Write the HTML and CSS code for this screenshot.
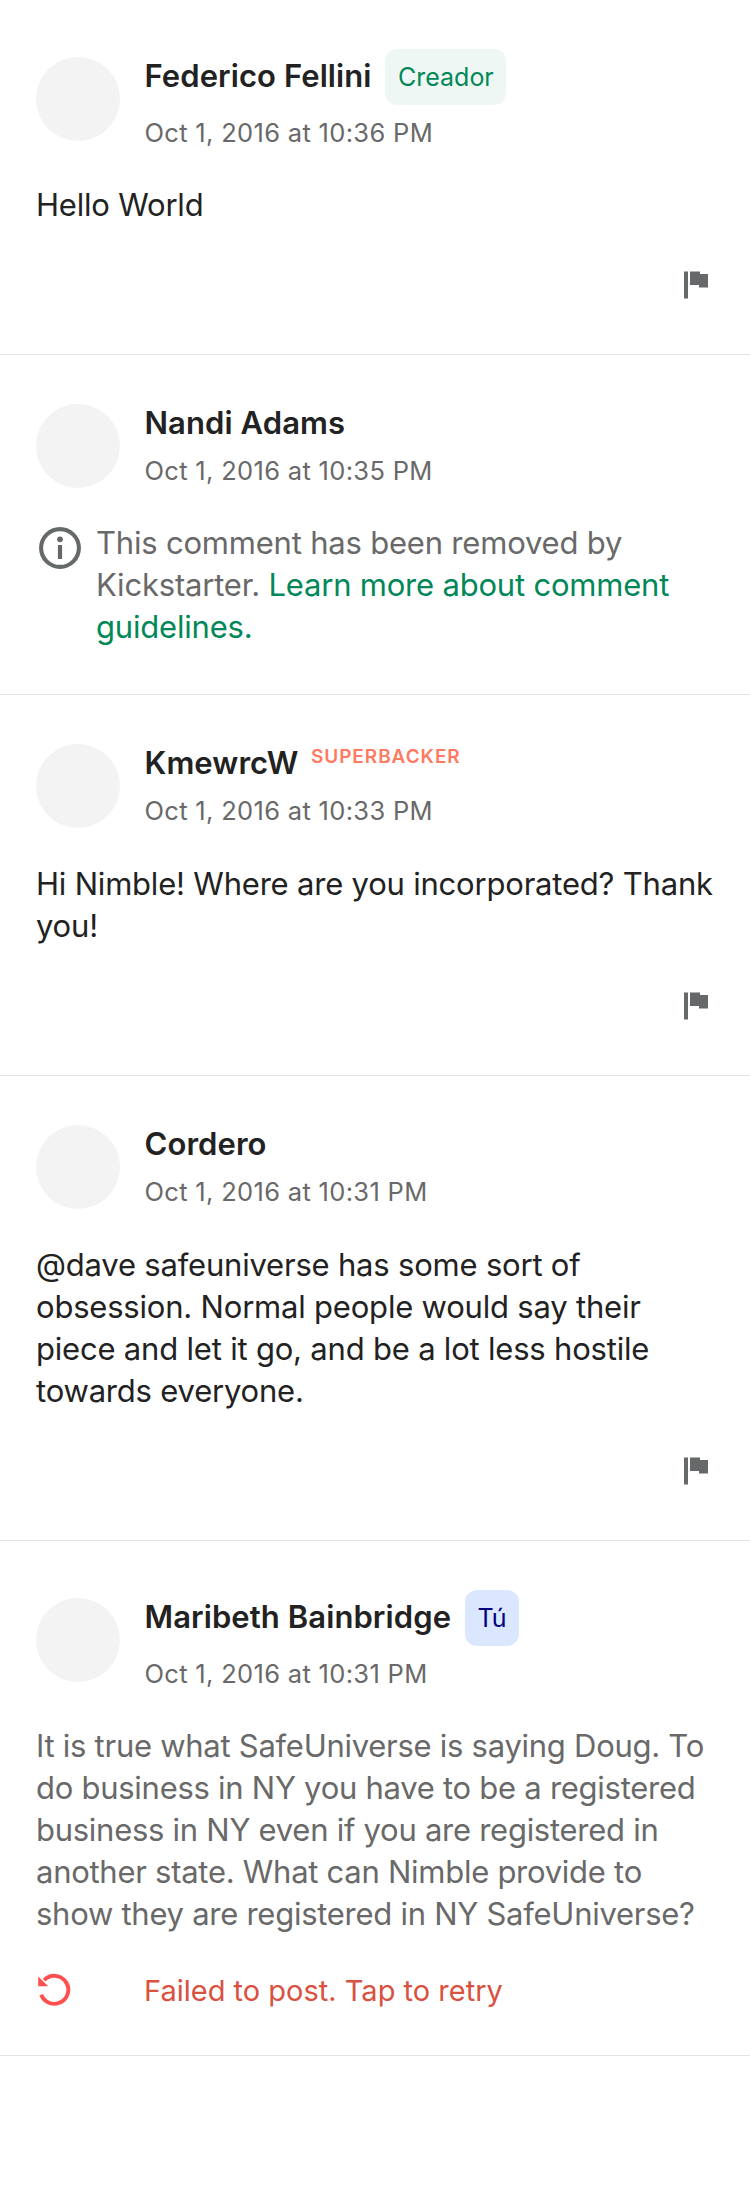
FILE: index.html
```html
<!DOCTYPE html>
<html lang="es">
<head>
<meta charset="utf-8">
<title>Comments</title>
<link rel="stylesheet" href="styles.css">
</head>
<body>
<svg width="0" height="0" class="sprite">
  <symbol id="flag" viewBox="0 0 24 28">
    <path d="M0 .4h4v27H0zM6 .4h10V3h8v13.4h-9V14H6z" fill="currentColor"/>
  </symbol>
</svg>
<main class="comments">
  <article class="comment">
    <header class="head">
      <div class="avatar"></div>
      <div class="meta">
        <div class="name-row"><span class="name">Federico Fellini</span><span class="badge creator">Creador</span></div>
        <time class="date">Oct 1, 2016 at 10:36 PM</time>
      </div>
    </header>
    <p class="body">Hello World</p>
    <div class="actions"><svg class="flag"><use href="#flag"/></svg></div>
  </article>
  <article class="comment removed">
    <header class="head">
      <div class="avatar"></div>
      <div class="meta">
        <div class="name-row"><span class="name">Nandi Adams</span></div>
        <time class="date">Oct 1, 2016 at 10:35 PM</time>
      </div>
    </header>
    <div class="notice">
      <svg class="info" viewBox="0 0 42 42"><circle cx="21" cy="21" r="18.9" fill="none" stroke="currentColor" stroke-width="4.1"/><circle cx="21" cy="12.3" r="2.9" fill="currentColor"/><path d="M18.9 18h4.2v14h-4.2z" fill="currentColor"/></svg>
      <p class="body muted">This comment has been removed by<br>Kickstarter. <a class="link">Learn more about comment<br>guidelines.</a></p>
    </div>
  </article>
  <article class="comment">
    <header class="head">
      <div class="avatar"></div>
      <div class="meta">
        <div class="name-row"><span class="name">KmewrcW</span><span class="superbacker">SUPERBACKER</span></div>
        <time class="date">Oct 1, 2016 at 10:33 PM</time>
      </div>
    </header>
    <p class="body">Hi Nimble! Where are you incorporated? Thank<br>you!</p>
    <div class="actions"><svg class="flag"><use href="#flag"/></svg></div>
  </article>
  <article class="comment">
    <header class="head">
      <div class="avatar"></div>
      <div class="meta">
        <div class="name-row"><span class="name">Cordero</span></div>
        <time class="date">Oct 1, 2016 at 10:31 PM</time>
      </div>
    </header>
    <p class="body">@dave safeuniverse has some sort of<br>obsession. Normal people would say their<br>piece and let it go, and be a lot less hostile<br>towards everyone.</p>
    <div class="actions"><svg class="flag"><use href="#flag"/></svg></div>
  </article>
  <article class="comment">
    <header class="head">
      <div class="avatar"></div>
      <div class="meta">
        <div class="name-row"><span class="name">Maribeth Bainbridge</span><span class="badge you">Tú</span></div>
        <time class="date">Oct 1, 2016 at 10:31 PM</time>
      </div>
    </header>
    <p class="body muted">It is true what SafeUniverse is saying Doug. To<br>do business in NY you have to be a registered<br>business in NY even if you are registered in<br>another state. What can Nimble provide to<br>show they are registered in NY SafeUniverse?</p>
    <div class="retry">
      <svg class="retry-icon" viewBox="0 0 34 34"><path d="M4.2 21.8A14 14 0 1 0 7.2 7.1" fill="none" stroke="currentColor" stroke-width="3.9"/><path d="M1.2 3.6 11.2 13.2h-10z" fill="currentColor"/></svg>
      <span class="retry-text">Failed to post. Tap to retry</span>
    </div>
  </article>
</main>
</body>
</html>
```
FILE: styles.css
```css
* { box-sizing: border-box; }
body { margin: 0; background: #fff; color: #222; font-family: Inter, "Liberation Sans", sans-serif; }
.sprite { position: absolute; }
.comment { padding: 49px 36px 0; border-bottom: 1px solid #e4e4e4; }
.head { display: flex; align-items: center; gap: 24.5px; }
.avatar { width: 84px; height: 84px; border-radius: 50%; background: #f3f3f3; flex: none; }
.meta { align-self: flex-start; }
.name-row { display: flex; align-items: center; gap: 14px; min-height: 38px; }
.name { font-size: 31px; font-weight: 600; line-height: 38px; white-space: nowrap; letter-spacing: 0.08px; }
.badge { height: 56px; line-height: 56px; padding: 0 12.5px; border-radius: 12px; font-size: 25px; }
.name:has(+ .badge) { margin-bottom: 2px; }
.creator { color: #028858; background: #eff7f4; }
.you { color: #000080; background: #dbe7ff; }
.superbacker { font-size: 19px; font-weight: 600; letter-spacing: 0.95px; line-height: 24px; margin: 0 0 12px -1.5px; color: #ff7a61; }
.date { display: block; margin-top: 13px; font-size: 25.5px; line-height: 31px; color: #696969; white-space: nowrap; letter-spacing: 0.32px; }
.name-row:has(.badge) + .date { margin-top: 12px; padding-bottom: 1px; }
.body { margin: 35px 0 0; font-size: 31px; line-height: 42px; white-space: nowrap; letter-spacing: -0.2px; }
.muted { color: #696969; letter-spacing: -0.27px; }
.link { color: #028858; }
.actions { display: flex; justify-content: flex-end; padding: 45px 6px 55px 0; color: #656969; }
.flag { width: 24px; height: 28px; display: block; }
.removed { padding-bottom: 46px; }
.notice { display: flex; gap: 15px; }
.notice .body { margin-top: 34px; letter-spacing: -0.2px; }
.info { width: 42px; height: 42px; margin: 39px 0 0 3px; flex: none; color: #656969; }
.retry { display: flex; align-items: center; gap: 73px; height: 40px; margin: 35px 0 45px; }
.retry-icon { width: 34px; height: 34px; margin-left: 1px; color: #ff5050; }
.retry-text { font-size: 29px; line-height: 40px; padding-top: 1px; color: #d9513f; }
```
